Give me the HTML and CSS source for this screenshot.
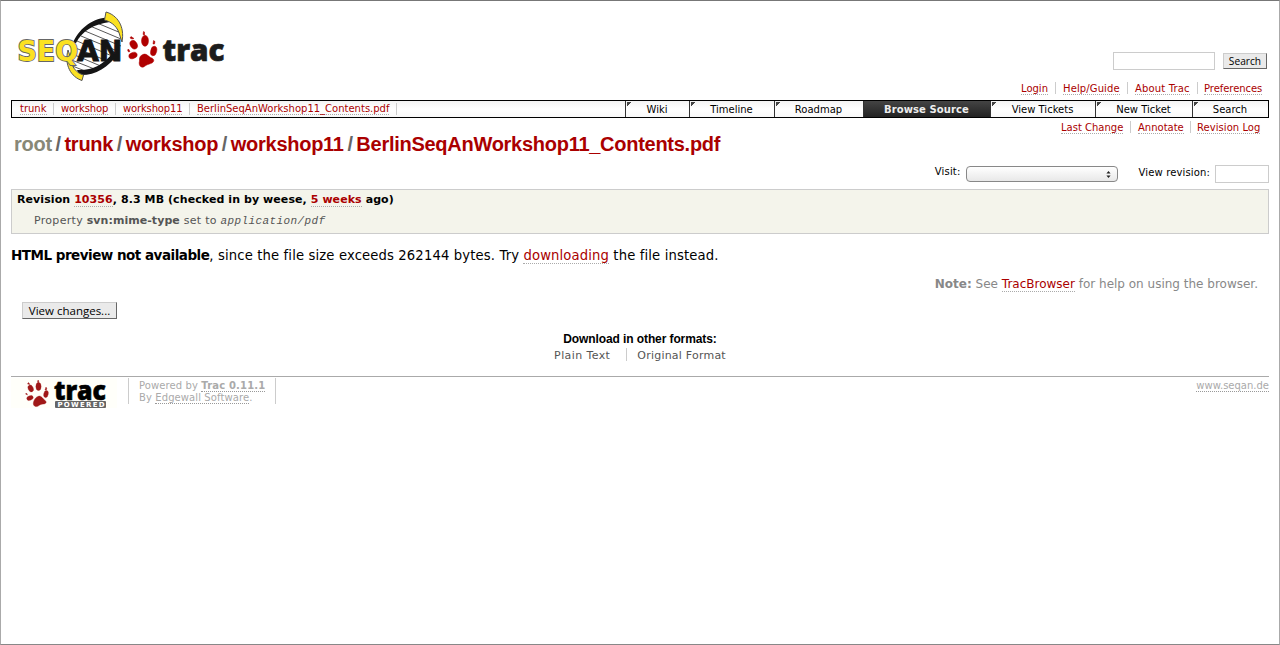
FILE: index.html
```html
<!DOCTYPE html>
<html lang="en">
<head>
<meta charset="utf-8">
<title>BerlinSeqAnWorkshop11_Contents.pdf</title>
<link rel="stylesheet" href="styles.css">
</head>
<body>
<div class="page">
  <header class="header">
    <svg class="logo" width="220" height="84" viewBox="11 5 220 84">
      <path d="M68 58C69 44 82 23 107 19L119 27 121 42C119 60 99 73 80 75Z" fill="#fff"/>
      <g fill="none" stroke="#444" stroke-width=".9">
        <path d="M97 23L121 33M90 26L121 39M85 31L121 46M81 36L115 50M77 41L112 56M73 47L110 62M70 53L103 67M69 59L97 70M70 65L90 73"/>
      </g>
      <path d="M73 43C78 30 91 19 106 17.500L110 22C94 24 82 31 76 43Z" fill="#151515"/>
      <path d="M118 54C108 68 94 76 79 75L77 70C91 71 103 65 112 54Z" fill="#151515"/>
      <path d="M106 12C117 15 125 26 122 42L120 36C118 27 112 22 104.500 20Z" fill="#fbe122" stroke="#555" stroke-width="1"/>
      <path d="M68 50C64 65 71 77 82 80.500L83.500 75C76 73 71 66 71 59Z" fill="#fbe122" stroke="#555" stroke-width="1"/>
      <text class="word-seq" x="17.500" y="61.200" textLength="60.500" lengthAdjust="spacingAndGlyphs">SEQ</text>
      <text class="word-an" x="77" y="61.200" textLength="45.500" lengthAdjust="spacingAndGlyphs">AN</text>
      <g fill="#b00000" stroke="#b00000" stroke-width=".5">
        <ellipse cx="133.700" cy="44.700" rx="3.400" ry="4.600" transform="rotate(-28 133.700 44.700)"/>
        <ellipse cx="145" cy="40.800" rx="3.500" ry="5.500"/>
        <ellipse cx="153.700" cy="51" rx="3" ry="4.800" transform="rotate(12 153.700 51)"/>
        <ellipse cx="133" cy="55.500" rx="4.300" ry="3" transform="rotate(-20 133 55.500)"/>
        <path d="M143 54.500C146 53 148 56 150.500 57.500C154 58.500 155 61 152 63C150 64 148 64 145 66C142 69 138 66 139.500 61C139 57 141 55 143 54.500Z"/>
        <path d="M143 34.500L143.500 31.500 144.500 32 144.500 35ZM130 38L131 36.500 134 38.500 132 39ZM153 44L153.500 40.500 155 41.500 154.500 44ZM127.500 50L128.500 49 130 51.500 128.500 52Z"/>
      </g>
      <text class="word-trac" x="162.500" y="61" textLength="62" lengthAdjust="spacingAndGlyphs">trac</text>
    </svg>
    <div class="header-side">
      <form class="search"><input class="field search-field" type="text"><button class="button search-button" type="button">Search</button></form>
      <ul class="links">
        <li class="login"><a class="link">Login</a></li><li class="help"><a class="link">Help/Guide</a></li><li class="about"><a class="link">About Trac</a></li><li class="prefs"><a class="link">Preferences</a></li>
      </ul>
    </div>
  </header>

  <nav class="mainnav">
    <ul class="crumbs">
      <li class="crumb-trunk"><a class="link">trunk</a></li><li class="crumb-workshop"><a class="link">workshop</a></li><li class="crumb-workshop11"><a class="link">workshop11</a></li><li class="crumb-file"><a class="link">BerlinSeqAnWorkshop11_Contents.pdf</a></li>
    </ul>
    <ul class="tabs">
      <li class="tab wiki">Wiki</li><li class="tab timeline">Timeline</li><li class="tab roadmap">Roadmap</li><li class="tab active">Browse Source</li><li class="tab view">View Tickets</li><li class="tab new">New Ticket</li><li class="tab find">Search</li>
    </ul>
  </nav>

  <ul class="links context">
    <li class="last-change"><a class="link">Last Change</a></li><li class="annotate"><a class="link">Annotate</a></li><li class="rev-log"><a class="link">Revision Log</a></li>
  </ul>

  <h1 class="path"><span class="root">root</span><i>/</i><span>trunk</span><i>/</i><span>workshop</span><i>/</i><span>workshop11</span><i>/</i><span>BerlinSeqAnWorkshop11_Contents.pdf</span></h1>

  <div class="jump">
    <span class="visit">Visit:</span>
    <span class="select"><svg width="5" height="9" viewBox="0 0 6 9"><path d="M.5 3.200L3 .2 5.500 3.200ZM.5 5.800L3 8.800 5.500 5.800Z" fill="#222"/></svg></span>
    <span class="rev-label">View revision:</span>
    <input class="field rev-field" type="text">
  </div>

  <section class="info">
    <div class="revision">Revision <a class="link">10356</a>, 8.3 MB (checked in by weese, <a class="link">5 weeks</a> ago)</div>
    <div class="property">Property <strong>svn:mime-type</strong> set to <code>application/pdf</code></div>
  </section>

  <p class="preview"><strong>HTML preview not available</strong>, since the file size exceeds 262144 bytes. Try <a class="link">downloading</a> the file instead.</p>
  <p class="note"><strong>Note:</strong> See <a class="link">TracBrowser</a> for help on using the browser.</p>
  <button class="button changes" type="button">View changes...</button>

  <section class="formats">
    <h3>Download in other formats:</h3>
    <div class="format-list"><span class="plain">Plain Text</span><span class="original">Original Format</span></div>
  </section>

  <footer class="footer">
    <svg class="powered-logo" width="106" height="30" viewBox="11 378 106 30">
      <rect x="11" y="378" width="106" height="30" fill="#fffffa"/>
      <g fill="#a01818" stroke="#a01818" stroke-width=".4">
        <ellipse cx="30.700" cy="388.500" rx="2.500" ry="3.500" transform="rotate(-25 30.700 388.500)"/>
        <ellipse cx="38.500" cy="386.500" rx="2.600" ry="4"/>
        <ellipse cx="46" cy="394" rx="2.200" ry="3.600" transform="rotate(12 46 394)"/>
        <ellipse cx="30" cy="398" rx="3.300" ry="2.200" transform="rotate(-20 30 398)"/>
        <path d="M38 396.500C41 395 42 398 44.500 400C47.500 402 46 404 43 404C39 404 38 408 34.500 406C31.500 404 35 397 38 396.500Z"/>
        <path d="M37.500 382L38 380 38.800 381 38.500 383ZM27.500 384L28.500 382.500 30 384.500ZM45 390L46 387 47 389 46 390ZM25.500 394L26.500 393 27.500 395Z"/>
      </g>
      <text class="small-trac" x="54" y="400" textLength="52" lengthAdjust="spacingAndGlyphs">trac</text>
      <rect x="55" y="401" width="51" height="7" rx="1" fill="#666"/>
      <text class="small-powered" x="57.500" y="407.200" textLength="47">POWERED</text>
    </svg>
    <div class="powered">Powered by <b class="link">Trac 0.11.1</b><br>By <a class="link">Edgewall Software</a>.</div>
    <div class="site"><a class="link">www.seqan.de</a></div>
  </footer>
</div>
</body>
</html>
```
FILE: styles.css
```css
* { box-sizing: border-box; }
body { margin: 0; background: #fff; color: #000; font-family: "DejaVu Sans", Verdana, sans-serif; font-size: 10px; }
ul, p, h1, h3 { margin: 0; padding: 0; list-style: none; font-weight: normal; }
.page { width: 1280px; height: 645px; padding: 0 10px; border: 1px solid #aaa; border-top-color: #777; border-bottom-color: #888; overflow: hidden; }
.link { color: #a00; border-bottom: 1px dotted #aaa; }
.field { border: 1px solid #ccc; background: #fff; padding: 0; margin: 0; height: 18px; }
.button { font: 10.2px "Open Sans", sans-serif; color: #000; background: #eaeaea; border: 1px solid #ccc; border-right-color: #666; border-bottom-color: #666; padding: 0; white-space: nowrap; }

.header { height: 99px; display: flex; justify-content: space-between; }
.logo { margin-top: 4px; overflow: visible; }
.word-seq, .word-an { font: bold 27.5px "DejaVu Sans", sans-serif; }
.word-seq { fill: #fbe122; stroke: #666; stroke-width: 1.8px; paint-order: stroke; }
.word-an { fill: #151515; stroke: #151515; stroke-width: 1px; }
.word-trac { font: 800 30px "Open Sans", sans-serif; fill: #1c1c1c; stroke: #1c1c1c; stroke-width: .7px; }
.header-side { padding-top: 51px; }
.search { display: flex; justify-content: flex-end; gap: 8px; margin-right: 2px; height: 18px; }
.search-field { width: 102px; }
.search-button { width: 44px; height: 16px; line-height: 14px; margin-top: 1px; }
.links { display: flex; justify-content: flex-end; margin-top: 12px; height: 12px; line-height: 14px; }
.links li { padding-left: 7px; border-right: 1px solid #ccc; white-space: nowrap; }
.links li:last-child { border: 0; padding-left: 6px; }
.links .link { display: inline-block; height: 13px; }
.login { width: 42px; }
.help { width: 72px; letter-spacing: .12px; }
.about { width: 70px; letter-spacing: .15px; }
.prefs { width: 71px; letter-spacing: -.05px; }
.last-change { width: 77px; }
.annotate { width: 60px; }
.links .rev-log { width: 78px; padding-left: 7px; letter-spacing: .05px; }

.mainnav { height: 18px; border: 1px solid #000; display: flex; justify-content: space-between; background: linear-gradient(#f3f3f3, #fff 50%, #f8f8f8); }
.crumbs { display: flex; padding: 2px 0 0 1px; }
.crumbs li { height: 12px; line-height: 11px; padding-left: 7px; border-right: 1px solid #ccc; white-space: nowrap; }
.crumbs .link { display: inline-block; height: 12px; }
.crumb-trunk { width: 41px; }
.crumb-workshop { width: 62px; letter-spacing: -.12px; }
.crumb-workshop11 { width: 74px; letter-spacing: -.15px; }
.crumb-file { width: 207px; }
.tabs { display: flex; line-height: 17px; text-align: center; }
.tab { padding-right: 1px; border-left: 1px solid #333; background: linear-gradient(135deg, #444 3px, transparent 3px) 1px 1px / 6px 6px no-repeat; }
.wiki { width: 64px; }
.timeline { width: 85px; }
.roadmap { width: 89px; }
.active { width: 127px; color: #eee; font-weight: bold; letter-spacing: .1px; background: linear-gradient(#444, #222); }
.view { width: 105px; }
.new { width: 97px; }
.find { width: 76px; }
.context { margin-top: 3px; }

.path { height: 30px; padding: 0 0 0 3px; margin-top: -3px; font: bold 20px/28px "Liberation Sans", Arial, sans-serif; letter-spacing: -.27px; color: #a00; white-space: nowrap; }
.path i { font-style: normal; color: #666; margin: 0 3.7px 0 3.7px; }
.path .root { color: #887; }

.jump { height: 29px; display: flex; justify-content: flex-end; padding-top: 5px; line-height: 13px; }
.visit { letter-spacing: .2px; }
.select { width: 152px; height: 16px; margin: 1px 21px 0 5px; border: 1px solid #888; border-radius: 4px; background: linear-gradient(#fff, #e8e8e8); display: flex; justify-content: flex-end; padding: 3px 6px 0 0; }
.rev-label { margin-right: 5px; padding-top: 1px; letter-spacing: .14px; }
.rev-field { width: 54px; }

.info { height: 45px; border: 1px solid #ccc; background: #f4f4eb; padding: 3px 5px; }
.revision { font-weight: bold; font-size: 11px; line-height: 13px; letter-spacing: .08px; }
.property { margin: 8px 0 0 17px; color: #555; font-size: 11px; line-height: 13px; letter-spacing: .3px; }
.property strong { letter-spacing: .05px; }
.property code { font: italic 11px "Liberation Mono", monospace; letter-spacing: .4px; }
.preview { margin-top: 13px; font-size: 13.2px; line-height: 17px; letter-spacing: .13px; }
.preview strong { font-size: 13.5px; letter-spacing: -.5px; }
.note { margin-top: 12px; padding-right: 11px; height: 17px; text-align: right; color: #888; font-size: 12px; line-height: 16px; }
.changes { display: block; width: 95px; height: 17px; line-height: 15px; margin: 9px 0 0 11px; font-size: 11.5px; }

.formats { margin-top: 13px; height: 44px; }
.formats h3 { text-align: center; font: bold 12px/14px "Liberation Sans", Arial, sans-serif; letter-spacing: -.1px; }
.format-list { display: flex; justify-content: center; color: #555; font-size: 11px; line-height: 15px; height: 13px; margin-top: 2px; }
.plain { padding-right: 16px; border-right: 1px solid #ccc; letter-spacing: .4px; }
.original { padding-left: 10px; letter-spacing: .22px; }

.footer { border-top: 1px solid #aaa; display: flex; color: #aaa; line-height: 12px; padding-top: 1px; }
.footer .link { color: #aaa; border-color: #999; }
.powered-logo { margin-right: 11px; overflow: visible; }
.small-trac { font: 800 27px "Open Sans", sans-serif; fill: #000; stroke: #000; stroke-width: .6px; }
.small-powered { font: bold 7px "DejaVu Sans", sans-serif; fill: #fff; }
.powered { border: solid #ccc; border-width: 0 1px; padding: 2px 10px 0; height: 26px; width: 148px; white-space: nowrap; letter-spacing: .1px; }
.powered b { letter-spacing: .18px; }
.site { margin-left: auto; padding-top: 2px; }
```
